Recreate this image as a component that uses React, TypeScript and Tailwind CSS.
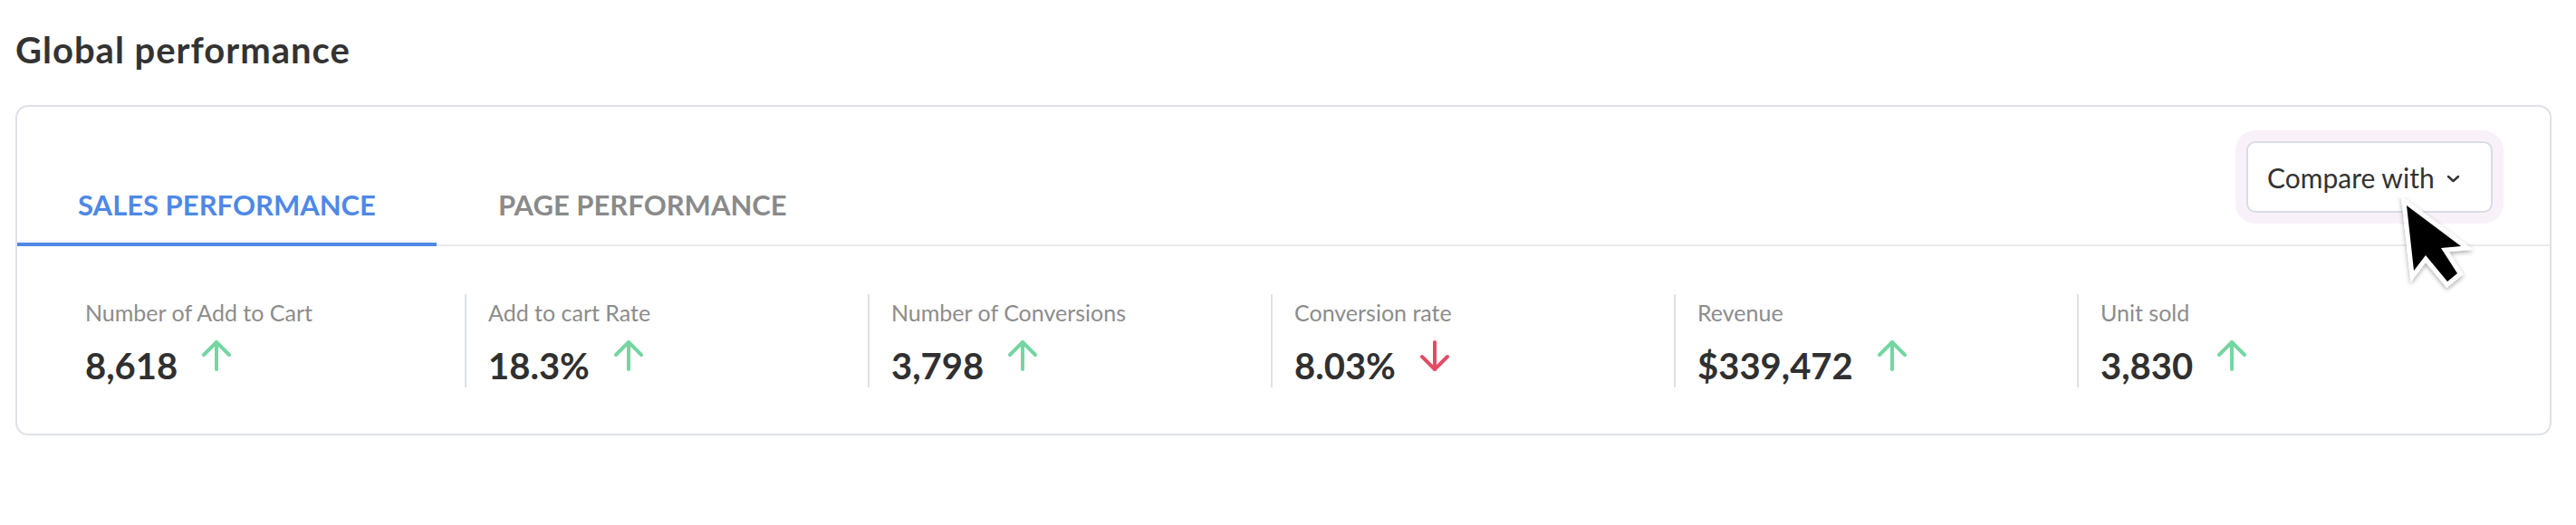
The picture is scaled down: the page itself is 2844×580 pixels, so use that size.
import React from "react";

type Metric = { label: string; value: string; up: boolean };

const metrics: Metric[] = [
  { label: "Number of Add to Cart", value: "8,618", up: true },
  { label: "Add to cart Rate", value: "18.3%", up: true },
  { label: "Number of Conversions", value: "3,798", up: true },
  { label: "Conversion rate", value: "8.03%", up: false },
  { label: "Revenue", value: "$339,472", up: true },
  { label: "Unit sold", value: "3,830", up: true },
];

function Arrow({ up }: { up: boolean }) {
  return (
    <svg
      width="34"
      height="36"
      viewBox="0 0 34 36"
      fill="none"
      stroke={up ? "#74d6a2" : "#e24d66"}
      strokeWidth="4"
      strokeLinecap="round"
      strokeLinejoin="round"
      className={up ? "" : "rotate-180"}
    >
      <path d="M17 3 V33" />
      <path d="M3 17 L17 3 L31 17" />
    </svg>
  );
}

function Cursor() {
  return (
    <svg
      width="90"
      height="120"
      viewBox="0 0 90 120"
      className="absolute left-[2647px] top-[218px]"
    >
      <defs>
        <filter id="cshadow" x="-30%" y="-30%" width="160%" height="160%">
          <feDropShadow dx="0" dy="2" stdDeviation="2.5" floodColor="#000" floodOpacity="0.35" />
        </filter>
      </defs>
      <polygon
        points="10,9 18,81 31,64 55,93 66,84 48,56 70,54"
        fill="#000"
        stroke="#fff"
        strokeWidth="10"
        strokeLinejoin="miter"
        strokeMiterlimit="4"
        paintOrder="stroke"
        filter="url(#cshadow)"
      />
    </svg>
  );
}

export default function App() {
  return (
    <div className="relative w-[2844px] h-[580px] bg-white overflow-hidden font-['Lato','Noto_Sans',sans-serif]">
      <h1 className="pt-[35px] pl-[17px] text-[40px] leading-none font-bold text-[#333333] tracking-[1px]">
        Global performance
      </h1>

      <div className="mt-[41px] ml-[17px] w-[2800px] border-2 border-[#dfe1e8] rounded-[14px] bg-white">
        <div className="flex justify-between h-[154px] border-b-2 border-[#e8eaef]">
          <div className="flex self-end">
            <div className="w-[463px] -mb-[2px] pb-[26px] border-b-4 border-[#4f88e6] text-center text-[31px] leading-none font-bold text-[#4f88e6]">
              SALES PERFORMANCE
            </div>
            <div className="pl-[68px] pr-[68px] -mb-[2px] pb-[26px] border-b-4 border-transparent text-[31px] leading-none font-bold text-[#8a8a8a]">
              PAGE PERFORMANCE
            </div>
          </div>
          <div className="self-start mt-[38px] mr-[63px]">
            <button className="flex items-center w-[272px] h-[79px] pl-[21px] bg-white border-2 border-[#d9dce3] rounded-[10px] ring-[12px] ring-[#f9f1f9] text-[30px] leading-none text-[#333333]">
              <span>Compare with</span>
              <svg width="15" height="9" viewBox="0 0 15 9" fill="none" className="ml-[13px] mt-[4px]">
                <path d="M2 2 L7.5 7 L13 2" stroke="#333" strokeWidth="2.4" strokeLinecap="round" strokeLinejoin="round" />
              </svg>
            </button>
          </div>
        </div>

        <div className="flex pl-[49px] pt-[53px] pb-[51px]">
          {metrics.map((m, i) => (
            <div
              key={m.label}
              className={`w-[445px] h-[103px] pl-[24px] pt-[8px] border-l-2 ${i === 0 ? "border-transparent" : "border-[#dfe1e8]"}`}
            >
              <div className="text-[25px] leading-none text-[#8c8c8c]">{m.label}</div>
              <div className="mt-[26px] flex items-start">
                <span className="text-[40px] leading-none font-bold text-[#303030]">{m.value}</span>
                <span className="ml-[26px] -mt-[9px]">
                  <Arrow up={m.up} />
                </span>
              </div>
            </div>
          ))}
        </div>
      </div>

      <Cursor />
    </div>
  );
}
